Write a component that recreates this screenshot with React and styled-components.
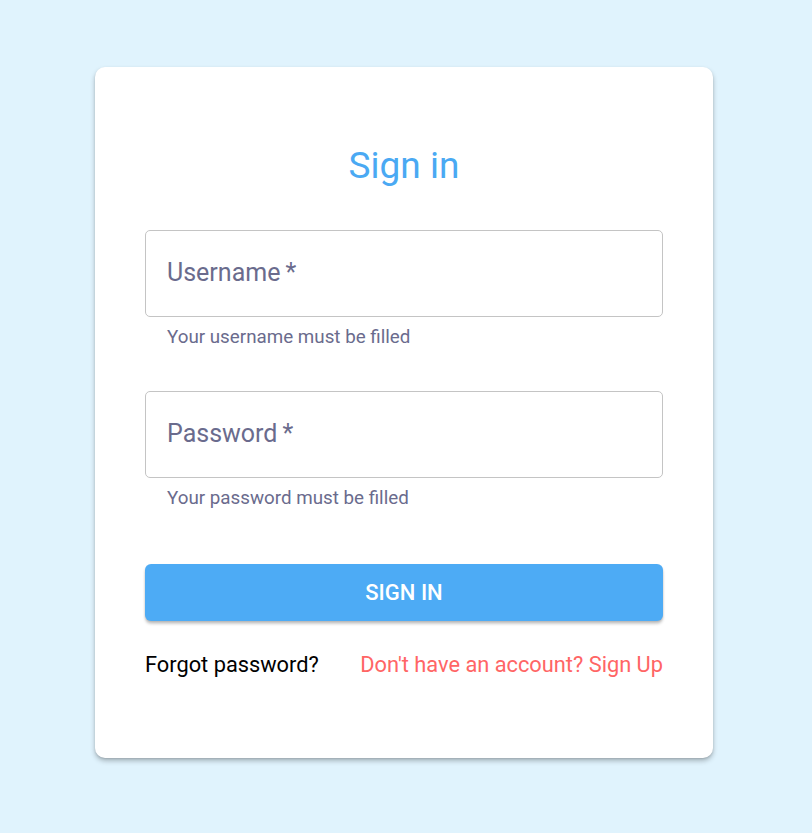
import React from 'react';
import styled, { createGlobalStyle } from 'styled-components';

const GlobalStyle = createGlobalStyle`
  body {
    margin: 0;
    background: #e0f3fd;
    font-family: Roboto, "Liberation Sans", sans-serif;
  }
`;

const Page = styled.div`
  display: flex;
  justify-content: center;
  padding: 67px 4px 0 0;
  min-height: 833px;
  box-sizing: border-box;
`;

const Card = styled.form`
  width: 618px;
  height: 691px;
  box-sizing: border-box;
  padding: 77px 50px 0;
  background: #fff;
  border-radius: 10px;
  box-shadow: 0 3px 5px rgba(0, 0, 0, 0.25), 0 1px 2px rgba(0, 0, 0, 0.1);
  display: flex;
  flex-direction: column;
`;

const Title = styled.h1`
  margin: 0 0 43px;
  text-align: center;
  font-size: 37px;
  font-weight: 400;
  line-height: 43px;
  color: #4aa9f3;
`;

const Field = styled.div`
  display: flex;
  flex-direction: column;
  margin-bottom: ${({ $gap }) => $gap}px;
`;

const InputBox = styled.label`
  display: flex;
  align-items: center;
  height: 87px;
  box-sizing: border-box;
  padding: 0 21px 2px;
  border: 1px solid #c4c4c4;
  border-radius: 5px;
  font-size: 25px;
  color: #6a6b8d;
`;

const Helper = styled.p`
  margin: 9px 0 0 22px;
  font-size: 18.8px;
  line-height: 22px;
  color: #6a6b8d;
`;

const Button = styled.button`
  height: 57px;
  border: none;
  border-radius: 6px;
  background: #4dabf5;
  color: #fff;
  font-family: inherit;
  font-size: 22px;
  font-weight: 500;
  box-shadow: 0 3px 3px rgba(0, 0, 0, 0.2), 0 1px 2px rgba(0, 0, 0, 0.12);
  cursor: pointer;
`;

const Links = styled.div`
  display: flex;
  justify-content: space-between;
  margin-top: 31px;
  font-size: 21.8px;
  line-height: 26px;
`;

const Link = styled.a`
  color: ${({ $accent }) => ($accent ? '#ff6565' : '#000')};
  text-decoration: none;
`;

export default function App() {
  return (
    <Page>
      <GlobalStyle />
      <Card onSubmit={e => e.preventDefault()}>
        <Title>Sign in</Title>
        <Field $gap={43}>
          <InputBox>Username&thinsp;*</InputBox>
          <Helper>Your username must be filled</Helper>
        </Field>
        <Field $gap={55}>
          <InputBox>Password&thinsp;*</InputBox>
          <Helper>Your password must be filled</Helper>
        </Field>
        <Button type="submit">SIGN IN</Button>
        <Links>
          <Link href="#">Forgot password?</Link>
          <Link href="#" $accent>Don't have an account? Sign Up</Link>
        </Links>
      </Card>
    </Page>
  );
}
